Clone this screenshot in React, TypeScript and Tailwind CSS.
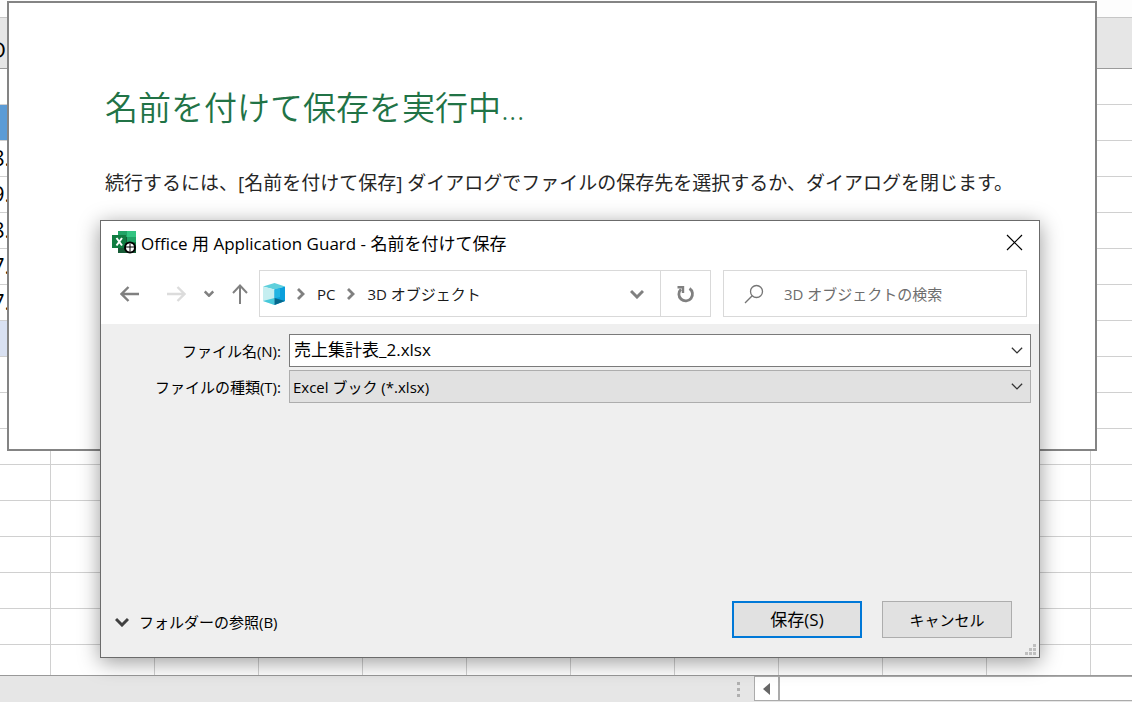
import React from 'react';

const ROWS = [
  { value: '', fill: 'bg-white' },
  { value: '', fill: 'bg-[#5b9bd5]' },
  { value: '8.', fill: 'bg-white' },
  { value: '9.', fill: 'bg-white' },
  { value: '8.', fill: 'bg-white' },
  { value: '7.', fill: 'bg-white' },
  { value: '7.', fill: 'bg-white' },
  { value: '', fill: 'bg-[#d9e1f2]' },
  ...Array.from({ length: 9 }, () => ({ value: '', fill: 'bg-white' })),
];

const COLUMNS = Array.from({ length: 10 }, (_, i) => i);

function Sheet() {
  return (
    <div className="h-0 min-h-0 flex-1 overflow-hidden">
      <div className="h-[17px] bg-[#fdfdfd]" />
      <table className="w-full table-fixed border-separate border-spacing-0 text-[22px] leading-8 text-black">
        <colgroup>
          <col className="w-[51px]" />
          {COLUMNS.map((c) => (
            <col key={c} className="w-[104px]" />
          ))}
          <col />
        </colgroup>
        <thead>
          <tr className="h-[52px] bg-[#e6e6e6]">
            <th className="border-y border-t-[#c6c6c6] border-b-[#9b9b9b] p-0 pt-3 text-left font-normal">
              <span className="-ml-2.5">D</span>
            </th>
            <th colSpan={11} className="border-y border-t-[#c6c6c6] border-b-[#9b9b9b] p-0" />
          </tr>
        </thead>
        <tbody>
          {ROWS.map((row, i) => (
            <tr key={i} className="h-9">
              <td className={`border-r border-b border-[#d0d0d0] p-0 align-top ${row.fill}`}>
                <span className="-ml-2">{row.value}</span>
              </td>
              {COLUMNS.map((c) => (
                <td key={c} className="border-r border-b border-[#d0d0d0] p-0" />
              ))}
              <td className="border-b border-[#d0d0d0] p-0" />
            </tr>
          ))}
        </tbody>
      </table>
    </div>
  );
}

function SheetFooter() {
  return (
    <footer className="flex h-[27px] shrink-0 border-t border-[#999999] bg-[#e6e6e6]">
      <div className="flex flex-1 items-center justify-end pr-[14px]">
        <div className="flex flex-col gap-[3px]">
          <span className="size-[3px] bg-[#b0b0b0]" />
          <span className="size-[3px] bg-[#b0b0b0]" />
          <span className="size-[3px] bg-[#b0b0b0]" />
        </div>
      </div>
      <div className="flex h-[25px] w-[378px] border-y border-l border-[#ababab] bg-white">
        <button aria-label="左へスクロール" className="flex w-6 items-center justify-center border-r border-[#ababab]">
          <svg width="7" height="12" viewBox="0 0 7 12" fill="#666">
            <path d="M7 0v12L0 6z" />
          </svg>
        </button>
        <div className="flex-1 border-l border-[#ababab]" />
      </div>
    </footer>
  );
}

function ExcelIcon() {
  return (
    <svg width="25" height="24" viewBox="0 0 25 24" className="shrink-0">
      <path d="M6 1h18v22H6z" fill="#185c37" />
      <path d="M6 1h9v6H6z" fill="#21a366" />
      <path d="M15 1h9v6h-9z" fill="#33c481" />
      <path d="M15 7h9v5h-9z" fill="#21a366" />
      <path d="M15 12h9v6h-9z" fill="#107c41" />
      <path d="M0 5h14v13H0z" fill="#107c41" />
      <path d="M4.500 8l5.500 7.500M10 8l-5.500 7.500" stroke="#fff" strokeWidth="2" />
      <circle cx="18" cy="17.500" r="6" fill="#000" />
      <circle cx="18" cy="17.500" r="4" fill="#fff" />
      <path d="M18 14v7.500M14 17h8" stroke="#000" strokeWidth="1" />
    </svg>
  );
}

function CubeIcon() {
  return (
    <svg width="22" height="22" viewBox="0 0 22 22" className="shrink-0">
      <path d="M0 3.500 11.500 0 22 3.500 11.500 6.500z" fill="#5fd0dc" />
      <path d="M0 3.500 11.500 6.500V22L0 18z" fill="#c5eef0" />
      <path d="M11.500 6.500 22 3.500V18l-10.500 4z" fill="#0a9fdc" />
      <path d="M11.500 6.500 17 5v9l-5.500 1.500z" fill="#22b4e2" />
      <path d="M0 18 11.500 15v7z" fill="#46c8da" />
      <path d="M11.500 15 22 18l-10.500 4z" fill="#05688c" />
    </svg>
  );
}

function Chevron({ className, width = 14, stroke = 3 }: { className?: string; width?: number; stroke?: number }) {
  return (
    <svg width={width} height={(width * 10) / 14} viewBox="0 0 14 10" fill="none" stroke="currentColor" strokeWidth={stroke} className={className}>
      <path d="M1 2l6 6 6-6" />
    </svg>
  );
}

function Crumb() {
  return (
    <svg width="8" height="12" viewBox="0 0 8 12" fill="none" stroke="#808080" strokeWidth="2.800" className="shrink-0">
      <path d="M1 1l5 5-5 5" />
    </svg>
  );
}

function NavBar() {
  return (
    <div className="flex h-[47px] items-stretch pr-3">
      <div className="flex w-[158px] shrink-0 items-center pl-[19px] text-[#808080]">
        <button aria-label="戻る" className="mr-[26px]">
          <svg width="20" height="16" viewBox="0 0 20 16" fill="none" stroke="currentColor" strokeWidth="2.400">
            <path d="M19 8H2M8.500 1 1.500 8l7 7" />
          </svg>
        </button>
        <button aria-label="進む" className="mr-[18px] text-[#dcdcdc]">
          <svg width="20" height="16" viewBox="0 0 20 16" fill="none" stroke="currentColor" strokeWidth="2.400">
            <path d="M1 8h17M11.500 1l7 7-7 7" />
          </svg>
        </button>
        <button aria-label="最近表示した場所" className="mr-[18px]">
          <Chevron width={10} stroke={3.5} />
        </button>
        <button aria-label="上へ">
          <svg width="16" height="20" viewBox="0 0 16 20" fill="none" stroke="currentColor" strokeWidth="2">
            <path d="M8 20V2M1 9l7-7.500L15 9" />
          </svg>
        </button>
      </div>
      <div className="flex flex-1 border border-[#d9d9d9] text-[#1a1a1a]">
        <div className="flex flex-1 items-center gap-3 pr-4 pl-[3px]">
          <CubeIcon />
          <Crumb />
          <span>PC</span>
          <Crumb />
          <span>3D オブジェクト</span>
          <button aria-label="以前の場所" className="ml-auto text-[#808080]">
            <Chevron />
          </button>
        </div>
        <button aria-label="更新" className="flex w-[50px] items-center justify-center border-l border-[#d9d9d9]">
          <svg width="18" height="18" viewBox="0 0 18 18" fill="none" stroke="#808080" strokeWidth="2.800">
            <path d="M12.500 3.500A6.800 6.800 0 1 1 4 4.200" />
            <path d="M0.500 2.200H6V8" strokeWidth="2.400" />
          </svg>
        </button>
      </div>
      <label className="ml-3 flex w-[304px] items-center gap-5 border border-[#d9d9d9] pl-5">
        <svg width="20" height="20" viewBox="0 0 20 20" fill="none" stroke="#757575" strokeWidth="1.300" className="shrink-0">
          <circle cx="12.500" cy="7.500" r="6" />
          <path d="M8.200 11.800 1 19" />
        </svg>
        <input
          type="text"
          aria-label="検索"
          placeholder="3D オブジェクトの検索"
          className="w-full min-w-0 bg-transparent outline-none placeholder:text-[#6d6d6d]"
        />
      </label>
    </div>
  );
}

function SaveForm() {
  return (
    <div className="grid grid-cols-[180px_1fr] items-center gap-x-2 gap-y-[3px] pr-2">
      <label htmlFor="file-name" className="text-right">
        ファイル名(N):
      </label>
      <div className="flex h-[33px] items-center border border-[#7a7a7a] bg-white pr-[7px]">
        <input
          id="file-name"
          type="text"
          defaultValue="売上集計表_2.xlsx"
          className="h-full min-w-0 flex-1 bg-transparent pb-1 pl-1 text-[17px] outline-none"
        />
        <button aria-label="ファイル名の候補">
          <Chevron width={12} stroke={1.5} className="text-[#333333]" />
        </button>
      </div>
      <label htmlFor="file-type" className="text-right">
        ファイルの種類(T):
      </label>
      <div className="relative">
        <select
          id="file-type"
          className="block h-[33px] w-full appearance-none rounded-none border border-[#adadad] bg-[#e1e1e1] pl-[3px] outline-none"
        >
          <option>Excel ブック (*.xlsx)</option>
        </select>
        <Chevron width={12} stroke={1.5} className="pointer-events-none absolute top-3 right-2 text-[#333333]" />
      </div>
    </div>
  );
}

function Grip() {
  return (
    <svg width="11" height="11" viewBox="0 0 11 11" fill="#bfbfbf" className="absolute right-[3px] bottom-[2px]">
      <path d="M8 0h3v3H8zM4 4h3v3H4zM8 4h3v3H8zM0 8h3v3H0zM4 8h3v3H4zM8 8h3v3H8z" />
    </svg>
  );
}

function SaveDialog() {
  return (
    <section
      role="dialog"
      aria-labelledby="dialog-title"
      className="absolute top-[220px] right-[92px] left-[100px] border border-[#6b6b6b] bg-white text-[15px] leading-6 text-black shadow-[0_4px_20px_rgba(0,0,0,0.4)]"
    >
      <header className="flex h-[49px] items-start gap-1 pt-[9px] pr-4 pl-[11px]">
        <ExcelIcon />
        <h2 id="dialog-title" className="flex-1 text-[17px] leading-7">
          Office 用 Application Guard - 名前を付けて保存
        </h2>
        <button aria-label="閉じる" className="py-1">
          <svg width="17" height="17" viewBox="0 0 17 17" stroke="#000" strokeWidth="1.200">
            <path d="M1 1l15 15M16 1 1 16" />
          </svg>
        </button>
      </header>
      <NavBar />
      <div className="mt-[7px] flex min-h-[333px] flex-col bg-[#efefef] pt-[10px] pb-[19px]">
        <SaveForm />
        <div className="mt-auto flex items-center gap-5 pr-[27px] pl-[14px]">
          <button className="mr-auto flex items-center gap-[10px] pt-1">
            <Chevron className="text-[#404040]" />
            フォルダーの参照(B)
          </button>
          <button className="h-[37px] w-[130px] border-2 border-[#0078d7] bg-[#e1e1e1] text-[17px]">保存(S)</button>
          <button className="h-[37px] w-[130px] border border-[#adadad] bg-[#e1e1e1]">キャンセル</button>
        </div>
      </div>
      <Grip />
    </section>
  );
}

export default function App() {
  return (
    <div className="relative flex h-screen flex-col overflow-hidden bg-white font-['Open_Sans','Noto_Sans_CJK_JP',sans-serif]">
      <Sheet />
      <SheetFooter />
      <main className="absolute top-px right-[35px] left-[7px] h-[450px] border-2 border-[#848484] bg-white px-24 pt-20">
        <h1 className="text-[33px] leading-[50px] font-[350] text-[#217346]">名前を付けて保存を実行中...</h1>
        <p className="mt-[34px] text-[19px] leading-8 whitespace-nowrap text-[#262626]">
          続行するには、[名前を付けて保存] ダイアログでファイルの保存先を選択するか、ダイアログを閉じます。
        </p>
      </main>
      <SaveDialog />
    </div>
  );
}
